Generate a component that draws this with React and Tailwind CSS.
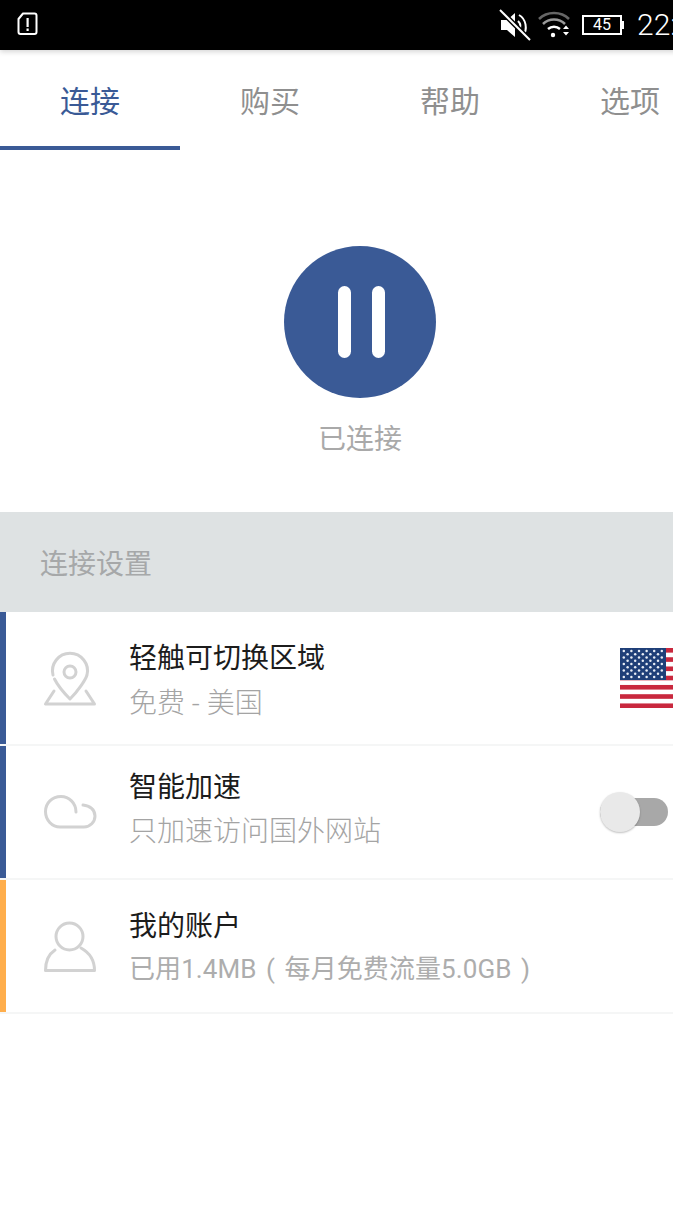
import React from "react";

const FONT = "font-['Roboto','Noto_Sans_CJK_SC',sans-serif]";

function Flag() {
  const stripes = [];
  for (let i = 0; i < 13; i += 2) stripes.push(<rect key={i} x="0" y={i * 4.62} width="100" height="4.62" fill="#c9283e" />);
  const stars = [];
  for (let r = 0; r < 9; r++) {
    const odd = r % 2 === 1;
    for (let c = 0; c < (odd ? 5 : 6); c++) {
      stars.push(<circle key={r + "-" + c} cx={(odd ? 7.6 : 3.8) + c * 7.6} cy={3 + r * 3.25} r="1.25" fill="#e8edf5" />);
    }
  }
  return (
    <svg width="100" height="60" viewBox="0 0 100 60" className="block">
      <rect width="100" height="60" fill="#fff" />
      {stripes}
      <rect width="46" height="32" fill="#1f3f78" />
      {stars}
    </svg>
  );
}

const ic = { fill: "none", stroke: "#d2d2d2", strokeWidth: 3, strokeLinecap: "round", strokeLinejoin: "round" };

function PinIcon() {
  return (
    <svg width="60" height="60" viewBox="40 648 60 60" className="block" {...ic}>
      <path d="M53 673 A17.5 17.5 0 1 1 87 673 C85.5 678 78 689 70 697 C62 689 57 682 54.5 677" />
      <circle cx="70" cy="670" r="6" />
      <path d="M54 689 L45.5 702 H94.5 L86 689" />
    </svg>
  );
}
function CloudIcon() {
  return (
    <svg width="60" height="40" viewBox="40 792 60 40" className="block" {...ic}>
      <path d="M76 812 C76 803 69 796.500 61 796.500 C52 796.500 45.500 803 45.500 811.500 C45.500 820 52 827 60 827 H84 C90 827 95 822 95 816 C95 810 90 805.500 83 805" />
    </svg>
  );
}
function UserIcon() {
  return (
    <svg width="60" height="60" viewBox="40 918 60 60" className="block" {...ic}>
      <circle cx="69.500" cy="936.500" r="13.500" />
      <path d="M55 950 C49 954 45.500 961 45.500 970.500 H94.500 C94.500 961 90 953 81 948" />
    </svg>
  );
}

function Row({ bar, icon, title, sub, subClass, textClass, iconClass, right }) {
  return (
    <div className="flex h-[134px] items-stretch border-b-2 border-[#f5f6f6]">
      <div className={"w-[6px] shrink-0 " + bar} />
      <div className={"flex w-[123px] shrink-0 justify-center pl-[5px] " + iconClass}>{icon}</div>
      <div className={"flex flex-col " + textClass}>
        <div className="text-[28px] leading-[40px] text-[#1c1c1c]">{title}</div>
        <div className={"leading-[40px] " + subClass}>{sub}</div>
      </div>
      {right}
    </div>
  );
}

export default function App() {
  return (
    <div className={"h-[1222px] w-[673px] overflow-hidden bg-white " + FONT}>
      <div className="w-[720px]">
        <div className="relative z-10 flex h-[50px] items-center justify-between bg-black pl-[17px] pr-[13px] shadow-[0_2px_5px_rgba(0,0,0,0.16)]">
          <svg width="21" height="24" viewBox="0 0 21 24" className="mb-[2px] block">
            <path d="M6 1.500 H17.500 A2 2 0 0 1 19.500 3.500 V20 A2 2 0 0 1 17.500 22 H3.500 A2 2 0 0 1 1.500 20 V7 Z" fill="none" stroke="#fff" strokeWidth="2" strokeLinejoin="round" />
            <rect x="9.500" y="6" width="2.200" height="9" fill="#fff" />
            <rect x="9.500" y="16.500" width="2.200" height="2.500" fill="#fff" />
          </svg>
          <div className="flex items-center">
            <svg width="32" height="32" viewBox="0 0 32 32" className="block">
              <path d="M2 11 H8 L16 4 V28 L8 21 H2 Z" fill="#fff" />
              <path d="M20 6 C27 10 29 20 24 27 M19 12 C22 15 22 18 20 21" fill="none" stroke="#fff" strokeWidth="2" />
              <path d="M1 1 L31 31" stroke="#000" strokeWidth="5" />
              <path d="M1 1 L31 31" stroke="#fff" strokeWidth="2" />
            </svg>
            <svg width="32" height="28" viewBox="0 0 32 28" className="ml-[7px] block">
              <path d="M1 8 C9 0 23 0 31 8" fill="none" stroke="#666" strokeWidth="2.500" />
              <path d="M5 13 C11 7 21 7 27 13" fill="none" stroke="#999" strokeWidth="2.500" />
              <path d="M10 18 C13.500 15 18.500 15 22 18" fill="none" stroke="#fff" strokeWidth="2.500" />
              <circle cx="15" cy="24" r="2.200" fill="#fff" />
              <path d="M25 18 L28 14.500 L31 18 Z M25 21 L28 24.500 L31 21 Z" fill="#fff" />
            </svg>
            <div className="ml-[12px] flex items-center">
              <div className="flex h-[20px] w-[40px] items-center justify-center border-2 border-white text-[16px] leading-none text-white">45</div>
              <div className="h-[8px] w-[2px] bg-white" />
            </div>
            <div className="ml-[13px] w-[70px] text-[30px] font-light leading-none text-white">22:58</div>
          </div>
        </div>

        <div className="flex h-[100px]">
          <div className="flex h-full w-[180px] items-center justify-center border-b-[4px] border-[#3a5a96] pt-[6px] text-[30px] text-[#3a5a96]">连接</div>
          <div className="flex h-full w-[180px] items-center justify-center pt-[2px] text-[30px] text-[#8f8f8f]">购买</div>
          <div className="flex h-full w-[180px] items-center justify-center pt-[2px] text-[30px] text-[#8f8f8f]">帮助</div>
          <div className="flex h-full w-[180px] items-center justify-center pt-[2px] text-[30px] text-[#8f8f8f]">选项</div>
        </div>

        <div className="flex h-[362px] flex-col items-center pt-[96px]">
          <div className="flex h-[152px] w-[152px] items-center justify-center gap-[21px] rounded-full bg-[#3a5a96] pl-[2px]">
            <div className="h-[72px] w-[13px] rounded-full bg-white" />
            <div className="h-[72px] w-[13px] rounded-full bg-white" />
          </div>
          <div className="mt-[22px] text-[28px] leading-[40px] text-[#a9a9a9]">已连接</div>
        </div>

        <div className="flex h-[100px] items-center bg-[#dee2e3] pl-[40px] pt-[5px] text-[28px] text-[#a6a8a9]">连接设置</div>

        <Row
          bar="bg-[#3a5a96]"
          icon={<PinIcon />}
          iconClass="pt-[38px]"
          title="轻触可切换区域"
          sub="免费 - 美国"
          subClass="text-[28px] font-light text-[#a4a4a4]"
          textClass="pt-[27px] gap-[5px]"
          right={<div className="ml-auto pt-[36px]"><Flag /></div>}
        />
        <Row
          bar="bg-[#3a5a96]"
          icon={<CloudIcon />}
          iconClass="pt-[46px]"
          title="智能加速"
          sub="只加速访问国外网站"
          subClass="text-[28px] font-light text-[#a4a4a4]"
          textClass="pt-[22px] gap-[4px]"
          right={
            <div className="ml-auto mr-[52px] flex items-center">
              <div className="relative h-[28px] w-[68px] rounded-full bg-[#a8a8a8]">
                <div className="absolute left-0 top-[-6px] h-[40px] w-[40px] rounded-full bg-[#e9e9e9] shadow-[0_1px_2px_rgba(0,0,0,0.25)]" />
              </div>
            </div>
          }
        />
        <Row
          bar="bg-[#ffae4c]"
          icon={<UserIcon />}
          iconClass="pt-[38px]"
          title="我的账户"
          sub="已用1.4MB ( 每月免费流量5.0GB )"
          subClass="text-[26px] text-[#adadad] [word-spacing:3px] tracking-[0.08px]"
          textClass="pt-[27px] gap-[2px]"
        />
      </div>
    </div>
  );
}
